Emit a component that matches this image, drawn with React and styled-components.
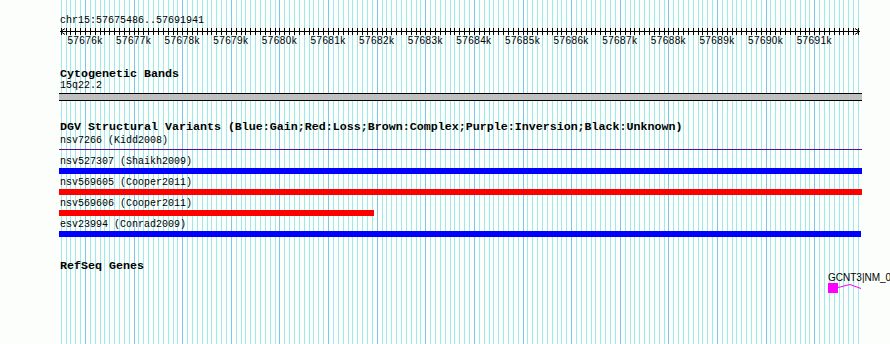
import React from 'react'
import styled, { createGlobalStyle } from 'styled-components'

const VIEW_START = 57675486
const VIEW_END = 57691941
const ORIGIN = 60
const PX_PER_BP = 800 / (VIEW_END - VIEW_START)
const TRACK_LEFT = 59
const TRACK_RIGHT = 862

const toX = bp => ORIGIN + (bp - VIEW_START) * PX_PER_BP

const minorTicks = []
for (let bp = Math.ceil(VIEW_START / 100) * 100; bp < VIEW_END; bp += 100) {
  minorTicks.push(bp)
}
const majorTicks = minorTicks.filter(bp => bp % 1000 === 0)

const variants = [
  { name: 'nsv7266', study: 'Kidd2008', thin: true, color: '#5a0b98', start: 57600000, end: 57700000 },
  { name: 'nsv527307', study: 'Shaikh2009', color: '#0000ff', start: 57600000, end: 57700000 },
  { name: 'nsv569605', study: 'Cooper2011', color: '#ff0000', start: 57600000, end: 57700000 },
  { name: 'nsv569606', study: 'Cooper2011', color: '#ff0000', start: 57600000, end: 57681924 },
  { name: 'esv23994', study: 'Conrad2009', color: '#0000ff', start: 57600000, end: 57691936 },
]

const gene = { name: 'GCNT3|NM_004751', start: 57691283 }

const span = ({ start, end }) => {
  const left = Math.max(TRACK_LEFT, Math.round(toX(start)) - 1)
  const right = Math.min(TRACK_RIGHT, Math.round(toX(end)) + 1)
  return { marginLeft: left - TRACK_LEFT, width: right - left }
}

const GlobalStyle = createGlobalStyle`
  html, body {
    margin: 0;
    padding: 0;
    background: #fcfefc;
  }
`

const Page = styled.div`
  position: relative;
  width: 890px;
  height: 344px;
  overflow: hidden;
  background: #fcfefc;
`

const GridLayer = styled.svg`
  position: absolute;
  top: 0;
  left: 0;
  z-index: 0;
`

const Content = styled.div`
  position: relative;
  z-index: 1;
  display: flex;
  flex-direction: column;
  padding: 15px 0 0 ${TRACK_LEFT}px;
`

const Track = styled.section`
  display: flex;
  flex-direction: column;
  margin-top: ${p => p.$gap || 20}px;
`

const Title = styled.div`
  font-family: 'Liberation Mono', monospace;
  font-weight: bold;
  font-size: 11.67px;
  line-height: 12px;
  color: #000;
  padding-left: 1px;
  white-space: nowrap;
`

const Label = styled.div`
  font-family: 'Liberation Mono', monospace;
  font-size: 10px;
  line-height: 11px;
  color: #000;
  padding-left: 1px;
  white-space: nowrap;
`

const RulerSvg = styled.svg`
  display: block;
  overflow: visible;
`

const BandBar = styled.div`
  margin-top: 2px;
  width: 803px;
  height: 6px;
  background: #c0c0c0;
  border-top: 1px solid #000;
  border-bottom: 1px solid #000;
`

const Rows = styled.div`
  display: flex;
  flex-direction: column;
  padding-top: 2px;
`

const Row = styled.div`
  display: flex;
  flex-direction: column;
  height: 21px;
`

const BarSlot = styled.div`
  margin-top: 1px;
  height: 6px;
  display: flex;
  align-items: ${p => (p.$thin ? 'flex-start' : 'stretch')};
`

const Bar = styled.div`
  background: ${p => p.$color};
  height: ${p => (p.$thin ? '1px' : '6px')};
  margin-top: ${p => (p.$thin ? '2px' : '0')};
`

const Gene = styled.div`
  display: flex;
  flex-direction: column;
  align-items: flex-start;
`

const GeneLabel = styled.div`
  font-family: 'Liberation Sans', Arial, sans-serif;
  font-size: 10px;
  line-height: 11px;
  color: #000;
  white-space: nowrap;
`

const Grid = () => (
  <GridLayer width="890" height="344">
    {minorTicks.map(bp => {
      const x = Math.round(toX(bp)) + 0.5
      return (
        <line
          key={bp}
          x1={x}
          x2={x}
          y1="0"
          y2="344"
          stroke={bp % 1000 === 0 ? '#80c4ee' : '#a0e8ea'}
          strokeWidth="1"
        />
      )
    })}
  </GridLayer>
)

const Ruler = () => (
  <RulerSvg width="831" height="20">
    <g transform={`translate(${-TRACK_LEFT},0)`} stroke="#000" strokeWidth="1" fill="none">
      <line x1="60" x2="860" y1="5.5" y2="5.5" />
      <path d="M65 2.5 L60.5 5.5 L65 8.5" />
      <path d="M855 2.5 L859.5 5.5 L855 8.5" />
      {minorTicks.map(bp => {
        const x = Math.round(toX(bp)) + 0.5
        return <line key={bp} x1={x} x2={x} y1="2" y2="9" />
      })}
    </g>
    <g transform={`translate(${-TRACK_LEFT},0)`}>
      {majorTicks.map(bp => (
        <text
          key={bp}
          x={toX(bp)}
          y="17.5"
          textAnchor="middle"
          fontFamily="'Liberation Sans', Arial, sans-serif"
          fontSize="10"
          letterSpacing="0.4"
          fill="#000"
        >
          {`${bp / 1000}k`}
        </text>
      ))}
    </g>
  </RulerSvg>
)

const GeneGlyph = () => (
  <svg width="40" height="10" style={{ display: 'block' }}>
    <rect x="0" y="0" width="10" height="10" fill="#ff00ff" />
    <path d="M10 4.5 L22 1.5 L33 5.5" stroke="#ff00ff" strokeWidth="1" fill="none" />
  </svg>
)

export default function App() {
  const geneLeft = Math.round(toX(gene.start)) - TRACK_LEFT
  return (
    <Page>
      <GlobalStyle />
      <Grid />
      <Content>
        <section>
          <Label>chr15:57675486..57691941</Label>
          <Ruler />
        </section>

        <Track $gap={22}>
          <Title>Cytogenetic Bands</Title>
          <Label>15q22.2</Label>
          <BandBar />
        </Track>

        <Track>
          <Title>
            DGV Structural Variants (Blue:Gain;Red:Loss;Brown:Complex;Purple:Inversion;Black:Unknown)
          </Title>
          <Rows>
            {variants.map(v => (
              <Row key={v.name}>
                <Label>{`${v.name} (${v.study})`}</Label>
                <BarSlot $thin={v.thin}>
                  <Bar $color={v.color} $thin={v.thin} style={span(v)} />
                </BarSlot>
              </Row>
            ))}
          </Rows>
        </Track>

        <Track>
          <Title>RefSeq Genes</Title>
          <Gene style={{ marginLeft: geneLeft }}>
            <GeneLabel>{gene.name}</GeneLabel>
            <GeneGlyph />
          </Gene>
        </Track>
      </Content>
    </Page>
  )
}
